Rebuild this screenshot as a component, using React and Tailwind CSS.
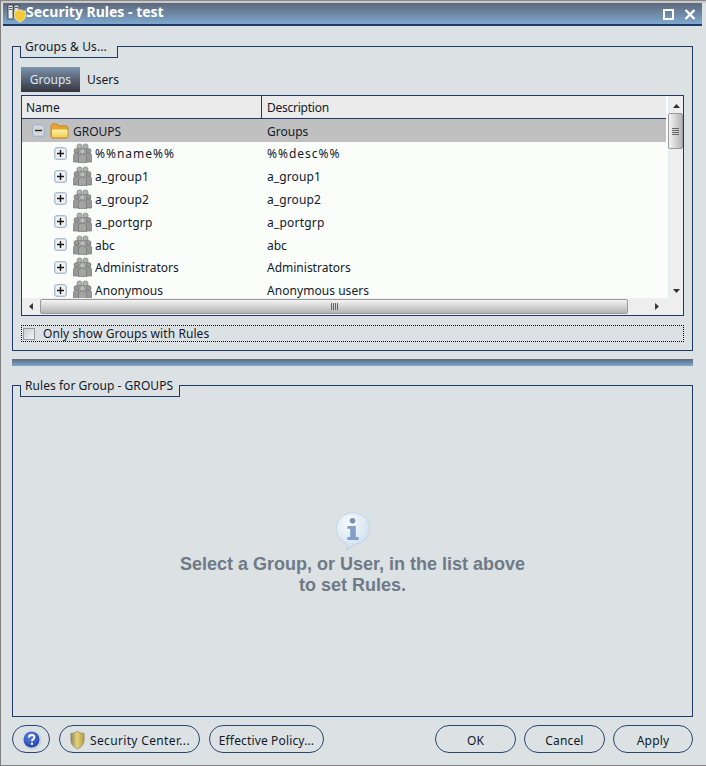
const font = { fontFamily: '"Noto Sans", sans-serif' };

function Plus() {
  return (
    <svg width="13" height="13" viewBox="0 0 13 13" className="shrink-0">
      <rect x="0.5" y="0.5" width="12" height="12" rx="2.5" fill="#cfdcea" stroke="#a9bdd3" />
      <rect x="2" y="2" width="9" height="9" fill="#f2f2f2" />
      <path d="M3 6.5h7M6.5 3v7" stroke="#1a1a1a" strokeWidth="1.4" />
    </svg>
  );
}

function Minus() {
  return (
    <svg width="13" height="13" viewBox="0 0 13 13" className="shrink-0">
      <rect x="0.5" y="0.5" width="12" height="12" rx="2.5" fill="#bcd0e4" stroke="#9db6d0" />
      <rect x="2" y="2" width="9" height="9" fill="#d6d6d6" />
      <path d="M3 6.5h7" stroke="#222" strokeWidth="1.4" />
    </svg>
  );
}

function Folder() {
  return (
    <svg width="19" height="16" viewBox="0 0 19 16" className="shrink-0">
      <defs>
        <linearGradient id="fold" x1="0" y1="0" x2="0" y2="1">
          <stop offset="0" stopColor="#fff3a0" />
          <stop offset="1" stopColor="#f3cf5c" />
        </linearGradient>
      </defs>
      <path d="M1 3.5C1 2 2 1 3 1h4l2 2h7c1.200 0 2 .8 2 2v8c0 1.200-.8 2-2 2H3c-1.200 0-2-.8-2-2z" fill="#e5a52e" stroke="#c4861c" />
      <path d="M2.500 6.500h14c.6 0 1 .4 1 1V13c0 .8-.6 1.300-1.300 1.300H3.300c-.7 0-1.300-.5-1.300-1.300V7c0-.3.200-.5.500-.5z" fill="url(#fold)" />
    </svg>
  );
}

function People() {
  return (
    <svg width="19" height="20" viewBox="0 0 19 20" className="shrink-0">
      <g fill="#b0b0b0" stroke="#828282" strokeWidth="0.7">
        <circle cx="6.500" cy="3.500" r="2.600" />
        <circle cx="12.500" cy="3.500" r="2.600" />
        <path d="M3 7.500c0-1.200 1.200-2 3.500-2h6c2.300 0 3.500.8 3.500 2V15H3z" />
      </g>
      <g fill="#989898" stroke="#767676" strokeWidth="0.7">
        <circle cx="3.500" cy="8" r="2.500" />
        <circle cx="15.500" cy="8" r="2.500" />
        <path d="M.5 12.500c0-1.500 1-2.500 3-2.500s3 1 3 2.500V19h-6z" />
        <path d="M12.500 12.500c0-1.500 1-2.500 3-2.500s3 1 3 2.500V19h-6z" />
      </g>
      <circle cx="9.500" cy="8.500" r="2.800" fill="#bcbcbc" stroke="#7c7c7c" strokeWidth="0.7" />
      <path d="M5.500 14c0-1.800 1.500-3 4-3s4 1.200 4 3v6h-8z" fill="#a4a4a4" stroke="#767676" strokeWidth="0.7" />
    </svg>
  );
}

function Shield() {
  return (
    <svg width="17" height="20" viewBox="0 0 18 18" preserveAspectRatio="none" className="shrink-0">
      <defs>
        <linearGradient id="sh" x1="0" y1="0" x2="1" y2="0">
          <stop offset="0" stopColor="#8d8763" />
          <stop offset="0.45" stopColor="#e6d27a" />
          <stop offset="1" stopColor="#b39c45" />
        </linearGradient>
      </defs>
      <path d="M9 1 C7 2.500 4.500 3 2 3 V9 C2 13 5 15.500 9 17 C13 15.500 16 13 16 9 V3 C13.500 3 11 2.500 9 1z" fill="url(#sh)" stroke="#8b8b76" strokeWidth="0.7" />
    </svg>
  );
}

function TitleIcon() {
  return (
    <svg width="19" height="19" viewBox="0 0 19 19" className="shrink-0">
      <rect x="1" y="1" width="5" height="14" fill="#e8ecf0" stroke="#30343c" strokeWidth="0.8" />
      <rect x="7" y="1" width="5" height="10" fill="#d5d9dd" stroke="#30343c" strokeWidth="0.8" />
      <path d="M2 3.500h3M2 5.500h3M8 3.500h3" stroke="#30343c" strokeWidth="0.8" />
      <path d="M13 5.500C11.500 6.700 9.500 7 7.500 7v5c0 3 3 5 5.500 6 2.500-1 5.500-3 5.500-6V7c-2 0-4-.3-5.500-1.500z" fill="#f3c93a" stroke="#fff3b5" strokeWidth="0.7" />
    </svg>
  );
}

function Info() {
  return (
    <svg width="40" height="41" viewBox="0 0 40 44" className="shrink-0">
      <defs>
        <radialGradient id="ib" cx="0.4" cy="0.3" r="0.8">
          <stop offset="0" stopColor="#f8fbfd" />
          <stop offset="0.7" stopColor="#d7e5f1" />
          <stop offset="1" stopColor="#a9c1d6" />
        </radialGradient>
      </defs>
      <path d="M20 2C10 2 2 9 2 19c0 8 5 14 12 16 0 3-.5 5-2 7 4-1 7-3 9-6.500 10-.5 17-7.500 17-16.500C38 9 30 2 20 2z" fill="url(#ib)" stroke="#c2d2df" strokeWidth="1" />
      <circle cx="19.500" cy="10.500" r="3" fill="#7d90ab" />
      <path d="M14 16h9v12h3v3H14v-3h3v-9h-3z" fill="#7f9fc9" />
    </svg>
  );
}

function Help() {
  return (
    <svg width="20" height="20" viewBox="0 0 20 20" className="shrink-0 ml-[2px] mt-[1px]">
      <defs>
        <radialGradient id="hb" cx="0.4" cy="0.3" r="0.8">
          <stop offset="0" stopColor="#5c83e0" />
          <stop offset="1" stopColor="#1c3fa8" />
        </radialGradient>
      </defs>
      <circle cx="10.500" cy="10.500" r="9" fill="#c8d0d8" />
      <circle cx="9.500" cy="9.500" r="8" fill="url(#hb)" />
      <path d="M7 7.500c0-1.700 1.200-2.500 2.700-2.500s2.700.9 2.700 2.300c0 2-2.400 2-2.400 4" fill="none" stroke="#fff" strokeWidth="1.900" />
      <rect x="8.900" y="12.700" width="2.100" height="2.100" fill="#fff" />
    </svg>
  );
}

function Legend({ children }) {
  return (
    <div className="absolute left-[7px] top-[-1px] h-[12px] bg-[#dce1e4] border-x border-b border-t-0 border-[#1f3a68] flex items-start">
      {children}
    </div>
  );
}

const rows = [
  ["%%name%%", "%%desc%%", "tracking-[1px]"],
  ["a_group1", "a_group1", "tracking-[0.1px]"],
  ["a_group2", "a_group2", "tracking-[0.1px]"],
  ["a_portgrp", "a_portgrp", "tracking-[0.2px]"],
  ["abc", "abc", ""],
  ["Administrators", "Administrators", ""],
  ["Anonymous", "Anonymous users", "tracking-[0.05px]"],
];

function Row({ name, desc, track }) {
  return (
    <div className={`flex h-[22.800px] items-center ${track}`}>
      <div className="w-[245px] flex items-center shrink-0">
        <div className="ml-[32px] mr-[3px] flex items-center gap-[6px]">
          <Plus />
          <People />
        </div>
        <span className="pt-[2px]">{name}</span>
      </div>
      <span className="pt-[2px]">{desc}</span>
    </div>
  );
}

function Button({ className, children }) {
  return (
    <div className={`h-[28px] border border-[#2b4570] rounded-[14px] flex items-center justify-center text-[#111a2a] ${className}`}>
      {children}
    </div>
  );
}

export default function App() {
  return (
    <div style={font} className="w-[706px] h-[766px] bg-[#dce1e4] border-l border-b border-[#808080] flex flex-col text-[12px] leading-[16px] text-[#111a2a] overflow-hidden">
      <div className="h-[3px] bg-[#c9c9c9] border-t border-[#8a8a8a] -ml-px shrink-0" />
      <div className="h-[23px] shrink-0 flex ml-[2px] mr-[4px] items-stretch">
        <div className="flex-1 bg-gradient-to-b from-[#5d687b] to-[#7fa8cf] border-b-[2px] border-[#1f3a68] flex items-center pl-[4px] pr-[6px]">
          <TitleIcon />
          <span className="text-white font-bold text-[14px] -mt-[3px]">Security Rules - test</span>
          <div className="ml-auto flex items-center gap-[10px] mt-[1px]">
            <div className="w-[11px] h-[11px] border-[2px] border-white" />
            <svg width="12" height="11" viewBox="0 0 12 11">
              <path d="M1.500 1l9 9M10.500 1l-9 9" stroke="#fff" strokeWidth="2.400" />
            </svg>
          </div>
        </div>
      </div>

      <div className="flex-1 flex flex-col pl-[11px] pr-[13px] pt-[20px] min-h-0">
        <div className="relative h-[305px] shrink-0 border border-[#1f3a68] px-[8px] pt-[20px]">
          <Legend>
            <span className="pl-[4px] leading-[14px] -mt-[6px] w-[96px] whitespace-nowrap tracking-[0.1px]">Groups &amp; Us...</span>
          </Legend>
          <div className="flex items-center h-[25px]">
            <div className="w-[59px] h-[25px] bg-gradient-to-b from-[#7f93ae] to-[#34363e] text-[#dfe6ef] flex items-center justify-center">Groups</div>
            <span className="ml-[7px]">Users</span>
          </div>
          <div className="mt-[3px] h-[221px] border border-[#1f3a68] bg-[#fbfdfb] flex flex-col">
            <div className="flex-1 flex min-h-0">
              <div className="flex-1 min-w-0 flex flex-col pr-[2px]">
                <div className="h-[23px] shrink-0 flex bg-[#ebebeb] border-b border-[#1f3a68]">
                  <div className="w-[240px] border-r border-[#1f3a68] pl-[4px] pt-[2px] flex items-center">Name</div>
                  <div className="pl-[5px] pt-[2px] flex items-center tracking-[-0.25px]">Description</div>
                </div>
                <div className="flex-1 overflow-hidden">
                  <div className="flex h-[23px] items-center bg-[#c0c0c0]">
                    <div className="w-[245px] flex items-center shrink-0">
                      <div className="ml-[10px] flex items-center gap-[5px] mr-[4px]">
                        <Minus />
                        <Folder />
                      </div>
                      <span className="pt-[2px]">GROUPS</span>
                    </div>
                    <span className="pt-[2px]">Groups</span>
                  </div>
                  {rows.map(([n, d, t]) => (
                    <Row key={n} name={n} desc={d} track={t} />
                  ))}
                </div>
              </div>
              <div className="w-[15px] shrink-0 bg-[#eeeeee] border-l border-[#e3ebf3] flex flex-col items-center relative">
                <svg width="7" height="4" viewBox="0 0 9 5" className="mt-[8px]"><path d="M4.500 0L9 5H0z" fill="#333" /></svg>
                <div className="mt-[5px] w-[15px] h-[36px] rounded-[2px] border border-[#9a9a9a] bg-gradient-to-r from-[#f4f4f4] to-[#b5b5b5] flex flex-col items-center justify-center gap-[1px] -ml-px">
                  <div className="w-[7px] h-px bg-[#666]" />
                  <div className="w-[7px] h-px bg-[#666]" />
                  <div className="w-[7px] h-px bg-[#666]" />
                  <div className="w-[7px] h-px bg-[#666]" />
                </div>
                <svg width="7" height="4" viewBox="0 0 9 5" className="mt-auto mb-[5px]"><path d="M0 0h9L4.500 5z" fill="#333" /></svg>
              </div>
            </div>
            <div className="h-[17px] shrink-0 bg-[#eeeeee] flex items-center relative">
              <svg width="4" height="7" viewBox="0 0 5 9" className="ml-[7px]"><path d="M5 0v9L0 4.500z" fill="#333" /></svg>
              <div className="ml-[7px] w-[588px] h-[15px] rounded-[2px] border border-[#9a9a9a] bg-gradient-to-b from-[#f4f4f4] to-[#b5b5b5] flex items-center justify-center gap-[1px]">
                <div className="h-[7px] w-px bg-[#666]" />
                <div className="h-[7px] w-px bg-[#666]" />
                <div className="h-[7px] w-px bg-[#666]" />
                <div className="h-[7px] w-px bg-[#666]" />
              </div>
              <svg width="4" height="7" viewBox="0 0 5 9" className="ml-[27px]"><path d="M0 0v9l5-4.500z" fill="#333" /></svg>
            </div>
          </div>
          <div className="mt-[9px] h-[17px] border border-dotted border-black flex items-center pl-[1px] tracking-[0.08px]">
            <div className="w-[12px] h-[12px] border border-[#9a9a9a] bg-gradient-to-br from-[#c8ccd0] to-[#f4f6f7]" />
            <span className="ml-[8px]">Only show Groups with Rules</span>
          </div>
        </div>

        <div className="mt-[8px] h-[7px] shrink-0 bg-gradient-to-b from-[#5d687b] to-[#7fa8cf]" />

        <div className="relative mt-[19px] h-[332px] shrink-0 border border-[#1f3a68] flex flex-col items-center pt-[125px]">
          <Legend>
            <span className="pl-[4px] pr-[6px] leading-[14px] -mt-[6px] whitespace-nowrap tracking-[0.05px]">Rules for Group - GROUPS</span>
          </Legend>
          <Info />
          <div className="mt-[2px] text-center font-bold text-[18px] leading-[21px] text-[#6e7a85]" style={{ fontFamily: '"Liberation Sans", sans-serif' }}>
            Select a Group, or User, in the list above
            <br />
            to set Rules.
          </div>
        </div>

        <div className="mt-[8px] flex items-start tracking-[0.15px]">
          <Button className="w-[38px]"><Help /></Button>
          <Button className="ml-[9px] w-[141px] gap-[4px] pt-[2px]"><Shield /><span className="pt-[2px] tracking-[0.35px]">Security Center...</span></Button>
          <Button className="ml-[9px] w-[115px] pt-[3px]">Effective Policy...</Button>
          <Button className="ml-auto w-[81px] pt-[3px]">OK</Button>
          <Button className="ml-[8px] w-[81px] pt-[3px]">Cancel</Button>
          <Button className="ml-[8px] w-[80px] pt-[3px]">Apply</Button>
        </div>
      </div>
    </div>
  );
}
